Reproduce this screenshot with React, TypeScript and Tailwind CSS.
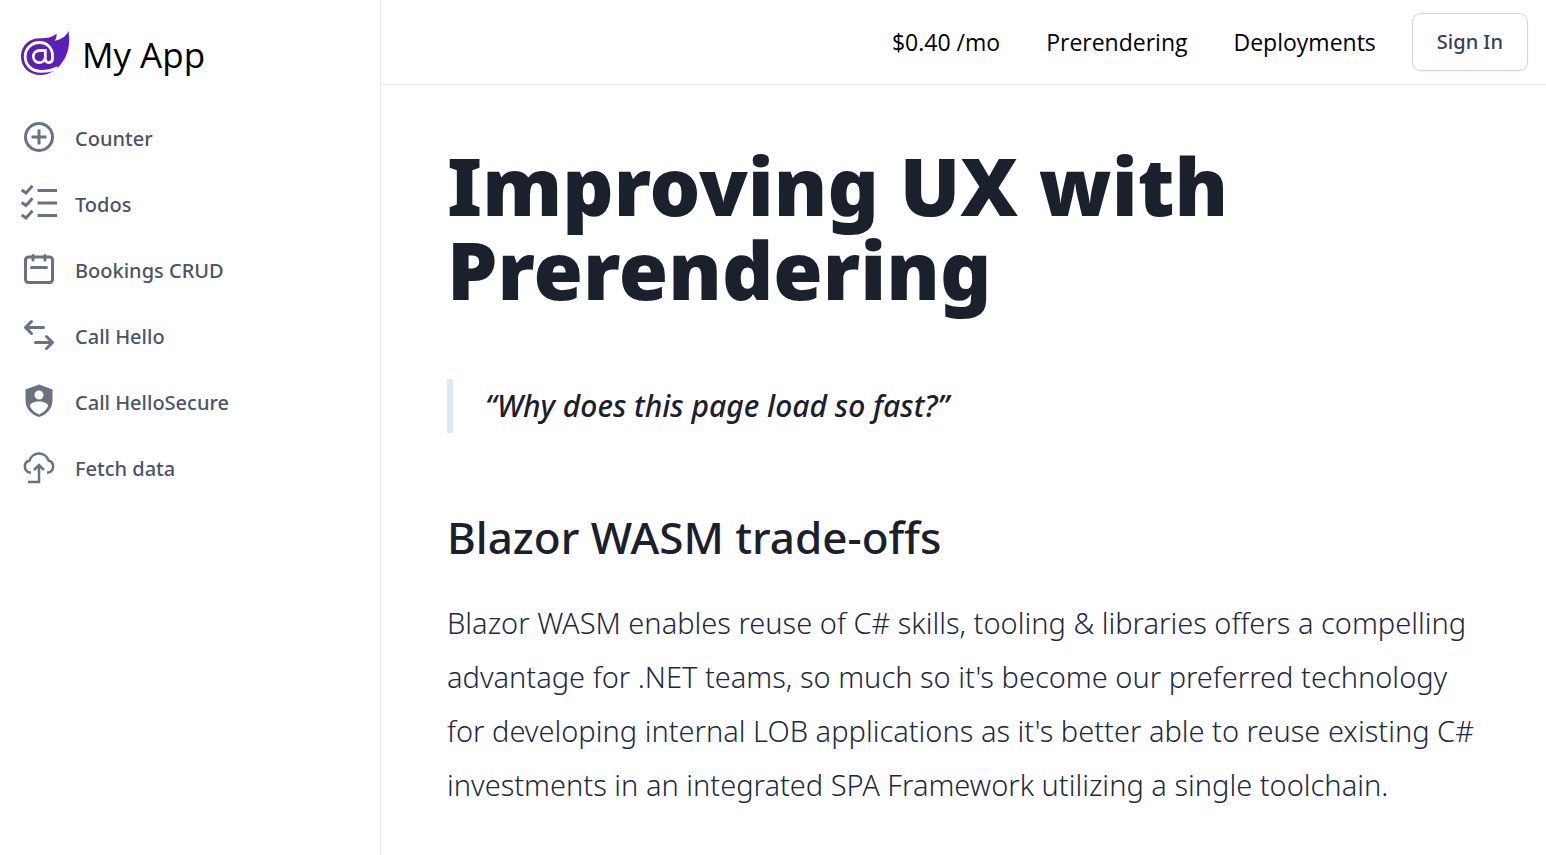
import type { ReactNode } from 'react';

const line = { fill: 'none', stroke: 'currentColor', strokeWidth: 3 } as const;

const items: { label: string; icon: ReactNode }[] = [
  {
    label: 'Counter',
    icon: (
      <g {...line}>
        <circle cx="18" cy="18" r="13.5" />
        <path d="M18 10.500v15M10.500 18h15" />
      </g>
    ),
  },
  {
    label: 'Todos',
    icon: (
      <g {...line}>
        <path d="M16.500 5.500H36M16.500 18H36M16.500 30.500H36" />
        <path strokeWidth="2.900" d="M.8 5L5 8 11.500.8M.8 17.500L5 20.500 11.500 13.300M.8 30L5 33 11.500 25.800" />
      </g>
    ),
  },
  {
    label: 'Bookings CRUD',
    icon: (
      <g {...line} strokeLinecap="round">
        <rect x="4.500" y="6" width="27" height="25.500" rx="3" />
        <path d="M12 4.500v4.500M24 4.500v4.500M10.500 16.500h15" />
      </g>
    ),
  },
  {
    label: 'Call Hello',
    icon: (
      <g {...line} strokeLinecap="round" strokeLinejoin="round">
        <path d="M10.500 4.500l-6 6 6 6M4.500 10.500h18M25.500 19.500l6 6-6 6M31.500 25.500h-17" />
      </g>
    ),
  },
  {
    label: 'Call HelloSecure',
    icon: (
      <path
        fill="currentColor"
        fillRule="evenodd"
        d="M18 1.500L31.500 6.500V17c0 8.500-5.500 14.500-13.500 17C10 31.500 4.500 25.500 4.500 17V6.500zM18 7.500a4.500 4.500 0 1 0 0 9 4.500 4.500 0 0 0 0-9zM18 18.500c-4.500 0-9.200 1.800-9.200 4.500 1.800 4 5.200 7 9.200 8.400 4-1.400 7.400-4.400 9.200-8.400 0-2.700-4.700-4.500-9.200-4.500z"
      />
    ),
  },
  {
    label: 'Fetch data',
    icon: (
      <g {...line} strokeWidth="2.500">
        <path d="M10 23.500H8.500A6.200 6.200 0 0 1 8.500 11.500a10 10 0 0 1 19 0 6.200 6.200 0 0 1 0 12H26" />
        <path d="M7 33h11V16M13 21l5-5 5 5" />
      </g>
    ),
  },
];

export default function App() {
  return (
    <div className="flex min-h-screen bg-white font-['Noto_Sans','Open_Sans',sans-serif]">
      <aside className="w-[381px] shrink-0 border-r border-gray-200 px-[21px] pt-[31px]">
        <a href="#home" className="flex items-start gap-3 font-['Open_Sans','Noto_Sans',sans-serif] text-[35px] leading-[48px] text-black">
          <svg viewBox="0 0 49 45" className="h-[45px] w-[49px]" aria-hidden="true">
            <path
              fill="#5c1fb8"
              d="M47.500 0c1.800 11 .2 22-5.800 30.500C36.500 38.500 29 44 19.500 44 8 44 0 36 0 25.500 0 14.500 8.500 7.300 19 7.300 26 7.300 31 6.500 35.500 2.800c.4 2.600-.4 5-1.800 7C40 8.500 45 5.500 47.500 0z"
            />
            <path
              fill="none"
              stroke="#fff"
              strokeWidth="2.800"
              strokeLinecap="round"
              d="M35.500 37C31 39.800 26 40.300 20 40.300 10.500 40.300 4.200 34 4.200 25.800 4.200 17.500 10.500 11.500 18.500 11.500c7.500 0 13 5.500 13 13V27.500c0 2.500-1.200 4-3.500 4s-3.700-1.500-3.700-4V19.500h-6.300a6 6 0 1 0 6.300 6.500"
            />
          </svg>
          My App
        </a>
        <nav className="mt-[25px]">
          {items.map(({ label, icon }) => (
            <a key={label} href="#" className="flex h-[66px] items-center gap-[18px] text-xl font-medium text-gray-600">
              <svg viewBox="0 0 36 36" className="size-9 text-gray-500" aria-hidden="true">
                {icon}
              </svg>
              <span className="pt-1">{label}</span>
            </a>
          ))}
        </nav>
      </aside>
      <div className="min-w-0 flex-1">
        <header className="box-content flex h-[84px] items-center justify-end gap-9 border-b border-gray-200 pr-[18px]">
          <nav className="flex gap-[46px] font-['Open_Sans','Noto_Sans',sans-serif] text-[23px] text-black">
            <a href="#pricing">$0.40 /mo</a>
            <a href="#prerendering">Prerendering</a>
            <a href="#deployments">Deployments</a>
          </nav>
          <button className="h-[58px] rounded-[9px] border border-gray-300 px-6 text-xl font-medium text-gray-700 shadow-xs">
            Sign In
          </button>
        </header>
        <main className="pt-[58px] pr-[60px] pl-[66px]">
          <h1 className="text-[80px] leading-[84px] font-black text-[#1a202c]">Improving UX with Prerendering</h1>
          <blockquote className="mt-[68px] border-l-6 border-slate-200 pl-8 text-[30px] leading-[54px] font-medium text-[#1a202c] italic">
            “Why does this page load so fast?”
          </blockquote>
          <h2 className="mt-[74px] text-[44px] leading-[60px] font-medium text-[#1a202c]">
            Blazor WASM trade-offs
          </h2>
          <p className="mt-[29px] text-[29px] leading-[54px] font-light text-slate-800">
            Blazor WASM enables reuse of C# skills, tooling &amp; libraries offers a compelling advantage for .NET teams, so
            much so it's become our preferred technology for developing internal LOB applications as it's better able to
            reuse existing C# investments in an integrated SPA Framework utilizing a single toolchain.
          </p>
        </main>
      </div>
    </div>
  );
}
